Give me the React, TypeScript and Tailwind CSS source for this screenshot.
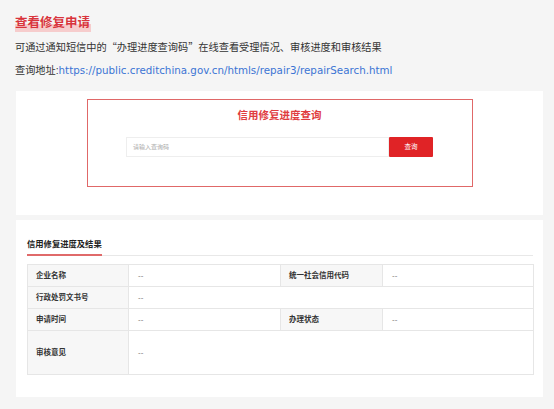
import React from 'react';

const font = { fontFamily: '"Liberation Sans", "Noto Sans CJK SC", sans-serif' };
const cjk = { fontFamily: '"Noto Sans CJK SC", "Liberation Sans", sans-serif' };

function Label({ children }: { children: React.ReactNode }) {
  return (
    <td className="border border-[#e6e6e6] bg-[#f7f7f7] pl-[8px] text-[7.5px] font-bold text-[#333]">
      {children}
    </td>
  );
}

function Value() {
  return <td className="border border-[#e6e6e6] bg-white pl-[9px] text-[8px] text-[#777]">--</td>;
}

export default function App() {
  return (
    <div className="min-h-[409px] w-[554px] bg-[#f5f5f5] pb-[14px]" style={font}>
      <div className="pl-[15px] pt-[14px]">
        <div className="w-fit bg-[linear-gradient(to_bottom,transparent_58%,#f6cccc_58%)] pr-[1px] text-[12.5px] font-bold leading-[18px] text-[#d9343c]">
          查看修复申请
        </div>
        <p className="mt-[5px] text-[10.2px] leading-[20px] text-[#333]" style={cjk}>
          可通过通知短信中的“办理进度查询码”在线查看受理情况、审核进度和审核结果
        </p>
        <p className="mt-[3px] text-[10.2px] leading-[20px] text-[#333]">
          查询地址:
          <span className="text-[10.3px] text-[#3b74d4]" style={{ fontFamily: '"DejaVu Sans", sans-serif' }}>
            https://public.creditchina.gov.cn/htmls/repair3/repairSearch.html
          </span>
        </p>
      </div>

      <div className="ml-[16px] mt-[10px] h-[124px] w-[527px] bg-white pt-[8px]">
        <div className="mx-auto flex h-[88px] w-[386px] flex-col items-center border-[1.5px] border-[#e06868]">
          <div className="mt-[8px] text-[10.5px] font-bold leading-[14px] text-[#e03c40]">信用修复进度查询</div>
          <div className="mt-[15px] flex h-[20px]">
            <div className="flex w-[263px] items-center border border-[#eeeeee] pl-[6px] text-[6px] text-[#aaa]">
              请输入查询码
            </div>
            <button className="w-[44px] rounded-[1px] bg-[#e02326] text-[6.5px] text-white">查询</button>
          </div>
        </div>
      </div>

      <div className="ml-[16px] mt-[5px] w-[527px] bg-white pb-[22px] pl-[11px] pr-[10px] pt-[18px]">
        <div className="text-[8.3px] font-bold leading-[12px] text-[#222]">信用修复进度及结果</div>
        <div className="mt-[4px] flex h-[2px] items-center bg-[linear-gradient(to_bottom,transparent_50%,#e8e8e8_50%)]">
          <div className="h-[2px] w-[75px] bg-[#e06a6a]" />
        </div>
        <table className="mt-[8px] w-[506px] table-fixed border-collapse">
          <colgroup>
            <col className="w-[101px]" />
            <col className="w-[152px]" />
            <col className="w-[102px]" />
            <col className="w-[151px]" />
          </colgroup>
          <tbody>
            <tr className="h-[22px]">
              <Label>企业名称</Label>
              <Value />
              <Label>统一社会信用代码</Label>
              <Value />
            </tr>
            <tr className="h-[22px]">
              <Label>行政处罚文书号</Label>
              <td colSpan={3} className="border border-[#e6e6e6] pl-[9px] text-[8px] text-[#777]">--</td>
            </tr>
            <tr className="h-[22px]">
              <Label>申请时间</Label>
              <Value />
              <Label>办理状态</Label>
              <Value />
            </tr>
            <tr className="h-[44px]">
              <Label>审核意见</Label>
              <td colSpan={3} className="border border-[#e6e6e6] pl-[9px] text-[8px] text-[#777]">--</td>
            </tr>
          </tbody>
        </table>
      </div>
    </div>
  );
}
